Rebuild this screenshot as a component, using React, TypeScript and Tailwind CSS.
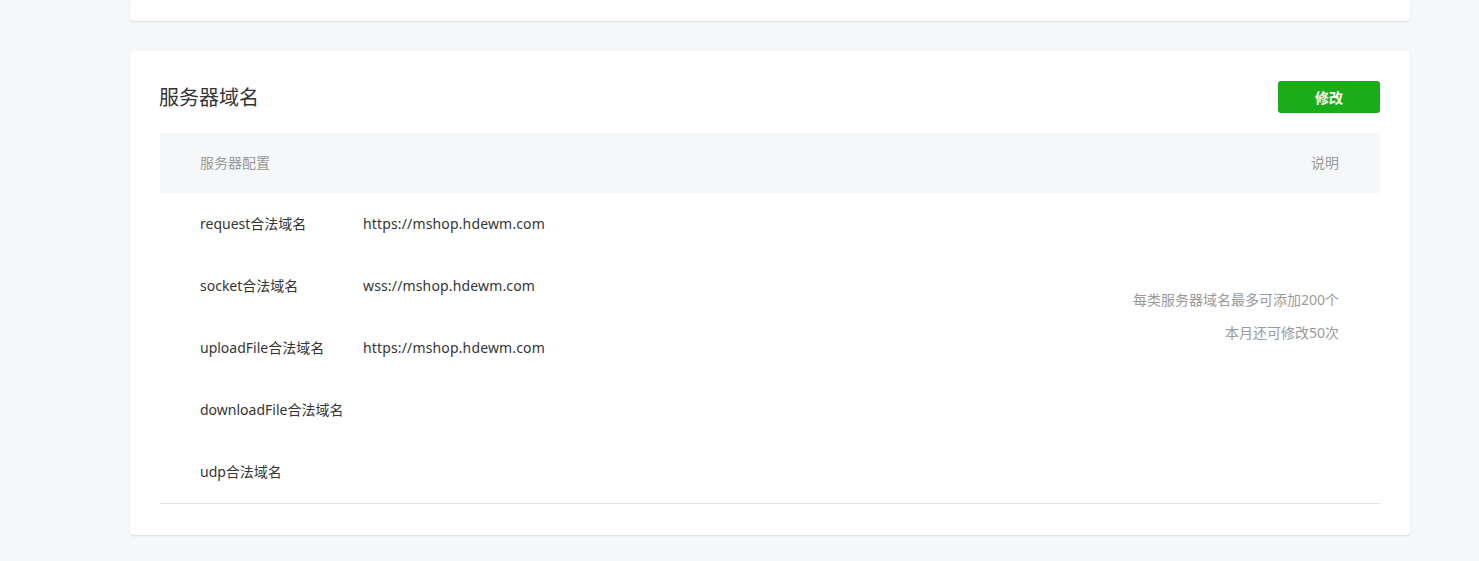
import React from "react";

const rows = [
  { label: "request合法域名", value: "https://mshop.hdewm.com" },
  { label: "socket合法域名", value: "wss://mshop.hdewm.com" },
  { label: "uploadFile合法域名", value: "https://mshop.hdewm.com" },
  { label: "downloadFile合法域名", value: "" },
  { label: "udp合法域名", value: "" },
];

export default function App() {
  return (
    <div
      className="min-h-[561px] w-full bg-[#f6f7f9] overflow-hidden"
      style={{ fontFamily: '"Noto Sans", "Noto Sans CJK SC", sans-serif' }}
    >
      <div className="ml-[130px] w-[1280px]">
        <div className="h-[21px] bg-white rounded-b-[4px] shadow-[0_1px_2px_rgba(0,0,0,0.12)]" />
        <div className="mt-[30px] bg-white rounded-[4px] shadow-[0_1px_2px_rgba(0,0,0,0.12)] px-[30px] pt-[30px] pb-[31px]">
          <div className="flex items-center justify-between h-[32px]">
            <h2 className="text-[20px] leading-[32px] text-[#353535] font-normal -ml-[1px] pt-[1px]">服务器域名</h2>
            <button className="w-[102px] h-[32px] rounded-[3px] bg-[#1aad19] text-white text-[14px] font-bold">
              修改
            </button>
          </div>
          <div className="mt-[20px] h-[60px] pb-[2px] bg-[#f6f7f9] flex items-center justify-between px-[40px] pr-[41px] text-[14px] text-[#9a9a9a]">
            <span>服务器配置</span>
            <span>说明</span>
          </div>
          <div className="flex border-b border-[#e4e4e4] pl-[40px] pr-[41px]">
            <div className="flex-1">
              {rows.map((r) => (
                <div key={r.label} className="h-[62px] pb-[2px] flex items-center text-[14px] text-[#353535]">
                  <span className="w-[163px] shrink-0">{r.label}</span>
                  <span className="tracking-[0.15px]">{r.value}</span>
                </div>
              ))}
            </div>
            <div className="pt-[90px] text-right text-[14px] leading-[33px] text-[#9a9a9a]">
              <div>每类服务器域名最多可添加200个</div>
              <div>本月还可修改50次</div>
            </div>
          </div>
        </div>
      </div>
    </div>
  );
}
